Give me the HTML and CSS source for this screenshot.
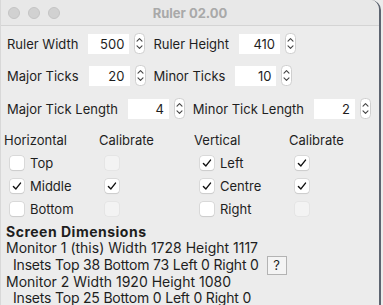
FILE: index.html
```html
<!DOCTYPE html>
<html>
<head>
<meta charset="utf-8">
<link rel="stylesheet" href="styles.css">
</head>
<body>
<div class="window">
  <div class="titlebar">
    <div class="lights"><span></span><span></span><span></span></div>
    <div class="title">Ruler 02.00</div>
  </div>
  <div class="content">
    <div class="row r1">
      <span class="lbl">Ruler Width</span><span class="field">500</span><span class="spin"><svg width="11" height="21" viewBox="0 0 11 21"><rect x="0.5" y="0.5" width="10" height="20" rx="4" fill="#fff" stroke="#cfcfcf"/><path d="M3 8.2 L5.5 5.6 L8 8.2 M3 12.8 L5.5 15.4 L8 12.8" fill="none" stroke="#444" stroke-width="1.1" stroke-linecap="round" stroke-linejoin="round"/></svg></span>
      <span class="lbl">Ruler Height</span><span class="field">410</span><span class="spin"><svg width="11" height="21" viewBox="0 0 11 21"><rect x="0.5" y="0.5" width="10" height="20" rx="4" fill="#fff" stroke="#cfcfcf"/><path d="M3 8.2 L5.5 5.6 L8 8.2 M3 12.8 L5.5 15.4 L8 12.8" fill="none" stroke="#444" stroke-width="1.1" stroke-linecap="round" stroke-linejoin="round"/></svg></span>
    </div>
    <div class="row r2">
      <span class="lbl">Major Ticks</span><span class="field">20</span><span class="spin"><svg width="11" height="21" viewBox="0 0 11 21"><rect x="0.5" y="0.5" width="10" height="20" rx="4" fill="#fff" stroke="#cfcfcf"/><path d="M3 8.2 L5.5 5.6 L8 8.2 M3 12.8 L5.5 15.4 L8 12.8" fill="none" stroke="#444" stroke-width="1.1" stroke-linecap="round" stroke-linejoin="round"/></svg></span>
      <span class="lbl">Minor Ticks</span><span class="field">10</span><span class="spin"><svg width="11" height="21" viewBox="0 0 11 21"><rect x="0.5" y="0.5" width="10" height="20" rx="4" fill="#fff" stroke="#cfcfcf"/><path d="M3 8.2 L5.5 5.6 L8 8.2 M3 12.8 L5.5 15.4 L8 12.8" fill="none" stroke="#444" stroke-width="1.1" stroke-linecap="round" stroke-linejoin="round"/></svg></span>
    </div>
    <div class="row r3">
      <span class="lbl">Major Tick Length</span><span class="field wide">4</span><span class="spin"><svg width="11" height="21" viewBox="0 0 11 21"><rect x="0.5" y="0.5" width="10" height="20" rx="4" fill="#fff" stroke="#cfcfcf"/><path d="M3 8.2 L5.5 5.6 L8 8.2 M3 12.8 L5.5 15.4 L8 12.8" fill="none" stroke="#444" stroke-width="1.1" stroke-linecap="round" stroke-linejoin="round"/></svg></span>
      <span class="lbl">Minor Tick Length</span><span class="field wide">2</span><span class="spin"><svg width="11" height="21" viewBox="0 0 11 21"><rect x="0.5" y="0.5" width="10" height="20" rx="4" fill="#fff" stroke="#cfcfcf"/><path d="M3 8.2 L5.5 5.6 L8 8.2 M3 12.8 L5.5 15.4 L8 12.8" fill="none" stroke="#444" stroke-width="1.1" stroke-linecap="round" stroke-linejoin="round"/></svg></span>
    </div>

    <div class="checks">
      <div class="hdr">Horizontal</div><div class="hdr">Calibrate</div><div class="hdr">Vertical</div><div class="hdr">Calibrate</div>

      <div class="cb"><span class="box"></span>Top</div>
      <div class="cb"><span class="box disabled"></span></div>
      <div class="cb"><span class="box on"><svg width="14" height="14" viewBox="0 0 14 14"><path d="M3.4 7.4 L5.9 9.9 L10.5 4.1" fill="none" stroke="#111" stroke-width="1.4" stroke-linecap="round" stroke-linejoin="round"/></svg></span>Left</div>
      <div class="cb"><span class="box on"><svg width="14" height="14" viewBox="0 0 14 14"><path d="M3.4 7.4 L5.9 9.9 L10.5 4.1" fill="none" stroke="#111" stroke-width="1.4" stroke-linecap="round" stroke-linejoin="round"/></svg></span></div>

      <div class="cb"><span class="box on"><svg width="14" height="14" viewBox="0 0 14 14"><path d="M3.4 7.4 L5.9 9.9 L10.5 4.1" fill="none" stroke="#111" stroke-width="1.4" stroke-linecap="round" stroke-linejoin="round"/></svg></span>Middle</div>
      <div class="cb"><span class="box on"><svg width="14" height="14" viewBox="0 0 14 14"><path d="M3.4 7.4 L5.9 9.9 L10.5 4.1" fill="none" stroke="#111" stroke-width="1.4" stroke-linecap="round" stroke-linejoin="round"/></svg></span></div>
      <div class="cb"><span class="box on"><svg width="14" height="14" viewBox="0 0 14 14"><path d="M3.4 7.4 L5.9 9.9 L10.5 4.1" fill="none" stroke="#111" stroke-width="1.4" stroke-linecap="round" stroke-linejoin="round"/></svg></span>Centre</div>
      <div class="cb"><span class="box on"><svg width="14" height="14" viewBox="0 0 14 14"><path d="M3.4 7.4 L5.9 9.9 L10.5 4.1" fill="none" stroke="#111" stroke-width="1.4" stroke-linecap="round" stroke-linejoin="round"/></svg></span></div>

      <div class="cb"><span class="box"></span>Bottom</div>
      <div class="cb"><span class="box disabled"></span></div>
      <div class="cb"><span class="box"></span>Right</div>
      <div class="cb"><span class="box disabled"></span></div>
    </div>

    <div class="dims">
      <div class="dtitle">Screen Dimensions</div>
      <div class="dline">Monitor 1 (this) Width 1728 Height 1117</div>
      <div class="dline inset btnrow">Insets Top 38 Bottom 73 Left 0 Right 0 <span class="qbtn">?</span></div>
      <div class="dline">Monitor 2 Width 1920 Height 1080</div>
      <div class="dline inset">Insets Top 25 Bottom 0 Left 0 Right 0</div>
    </div>
  </div>
</div>
</body>
</html>
```
FILE: styles.css
```css
html, body {
  margin: 0;
  padding: 0;
  background: #ececec;
}
body {
  font-family: Inter, "Open Sans", sans-serif;
  font-size: 13px;
  color: #1e1e1e;
}
.window {
  width: 381px;
  height: 305px;
  border-right: 2px solid #5d6470;
  border-left: 1px solid #d8d8d8;
  box-sizing: border-box;
  border-top-right-radius: 10px;
  overflow: hidden;
  background: #ececec;
}
.titlebar {
  height: 25px;
  background: #e8e8e8;
  border-bottom: 1px solid #d4d4d4;
  display: flex;
  align-items: center;
  position: relative;
}
.lights {
  display: flex;
  gap: 8px;
  padding-left: 7px;
}
.lights span {
  width: 12px;
  height: 12px;
  border-radius: 50%;
  background: #d1d1d1;
  border: 0.5px solid #c4c4c4;
  box-sizing: border-box;
}
.title {
  position: absolute;
  left: 0;
  right: 0;
  text-align: center;
  font-weight: bold;
  color: #a9a9a9;
  font-size: 13px;
}
.content {
  padding-top: 7px;
}
.row {
  display: flex;
  align-items: center;
  height: 21px;
  padding-left: 6px;
}
.r2 { margin-top: 11px; }
.r3 { margin-top: 12px; }
.lbl { white-space: nowrap; }
.field {
  background: #fff;
  height: 20px;
  line-height: 20px;
  width: 41px;
  box-sizing: border-box;
  text-align: right;
  padding-right: 5px;
  margin-left: 10px;
}
.field.wide { width: 45px; }
.spin {
  display: flex;
  margin-left: 5px;
  margin-right: 8px;
}

.checks {
  display: grid;
  grid-template-columns: 95px 95px 95px 95px;
  grid-auto-rows: 23px;
  margin-top: 9px;
  padding-left: 3px;
}
.hdr {
  display: flex;
  align-items: center;
}
.cb {
  display: flex;
  align-items: center;
  padding-left: 6px;
}
.box {
  width: 14px;
  height: 14px;
  border-radius: 3px;
  background: #fff;
  box-shadow: 0 0 0 0.5px #c9c9c9, 0 0.5px 1px rgba(0,0,0,0.12);
  margin-right: 6px;
  display: flex;
}
.box.disabled {
  background: #f3f3f3;
  box-shadow: 0 0 0 0.5px #dedede;
}
.dims {
  margin-top: 4px;
  padding-left: 5px;
  font-size: 14px;
}
.dtitle {
  font-weight: bold;
  line-height: 16px;
  letter-spacing: 0.5px;
}
.dline {
  line-height: 16px;
  white-space: nowrap;
}
.inset {
  padding-left: 7px;
  letter-spacing: -0.2px;
}
.btnrow {
  display: flex;
  align-items: center;
  height: 18px;
}
.qbtn {
  display: inline-flex;
  align-items: center;
  justify-content: center;
  width: 20px;
  height: 19px;
  box-sizing: border-box;
  border: 1px solid #b3b3b3;
  background: #f4f4f4;
  margin-left: 8px;
  font-size: 13px;
  letter-spacing: 0;
}
```
